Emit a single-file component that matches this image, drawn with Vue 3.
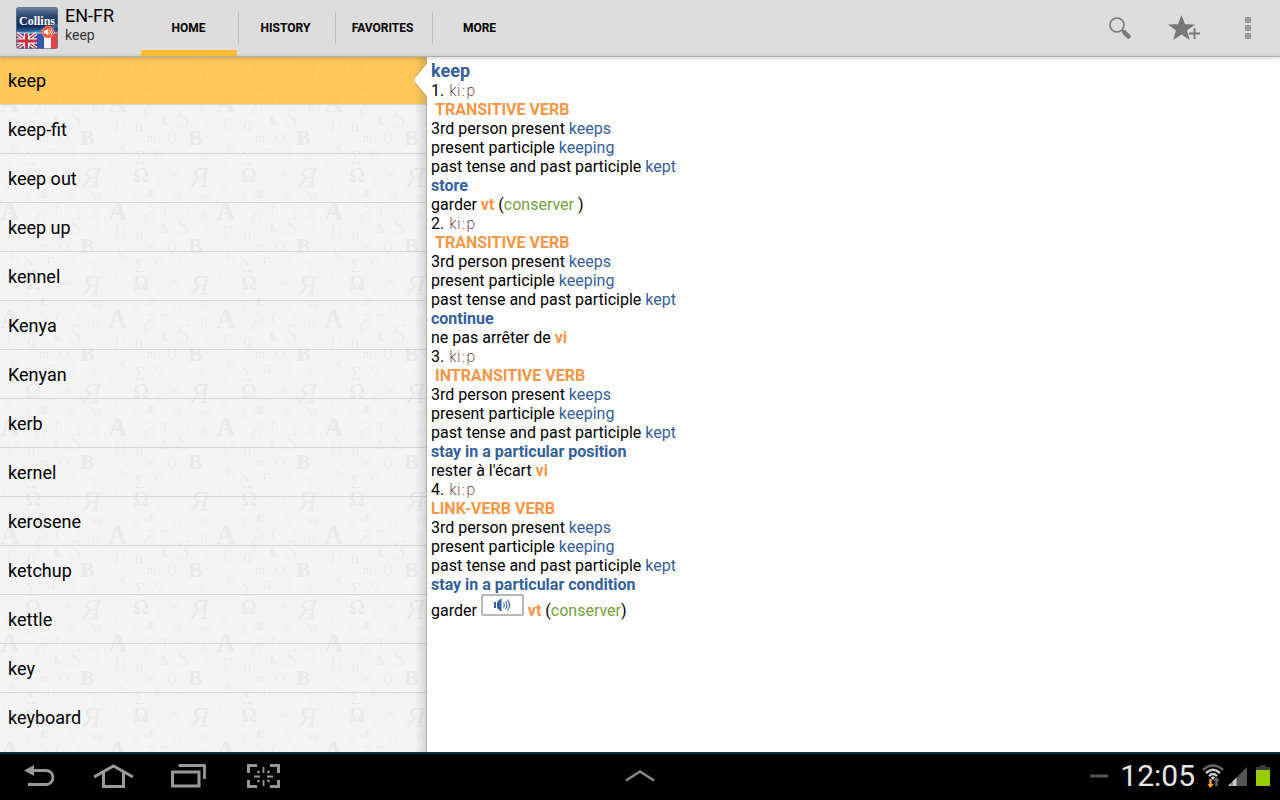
<template>
  <div class="app">
    <header class="action-bar">
      <div class="brand">
        <svg class="logo" viewBox="0 0 42 42" role="img" aria-label="Collins">
          <defs>
            <linearGradient id="logoSky" x1="0" y1="0" x2="0" y2="1">
              <stop offset="0" stop-color="#7186a0" />
              <stop offset="0.3" stop-color="#2f4c74" />
              <stop offset="0.7" stop-color="#0f2a58" />
              <stop offset="1" stop-color="#3c78b8" />
            </linearGradient>
            <clipPath id="logoClip"><rect width="42" height="42" rx="3" /></clipPath>
          </defs>
          <g clip-path="url(#logoClip)">
            <rect width="42" height="27" fill="url(#logoSky)" />
            <path d="M0 24 Q20 27 42 16 V20 Q24 28 0 27z" fill="#4c8ac4" opacity="0.6" />
            <rect y="26" width="21" height="16" fill="#2b3f86" />
            <path d="M0 26 L21 42 M21 26 L0 42" stroke="#eee" stroke-width="4" />
            <path d="M0 26 L21 42 M21 26 L0 42" stroke="#cc3340" stroke-width="1.4" />
            <path d="M10.500 26 V42 M0 34 H21" stroke="#eee" stroke-width="5.500" />
            <path d="M10.500 26 V42 M0 34 H21" stroke="#cc3340" stroke-width="3" />
            <rect x="21" y="26" width="7" height="16" fill="#3556b0" />
            <rect x="28" y="26" width="7" height="16" fill="#f4f4f6" />
            <rect x="35" y="26" width="7" height="16" fill="#de4348" />
            <path d="M0 26 H42" stroke="#d5d9e2" stroke-width="1" />
            <circle cx="32" cy="25" r="6" fill="#e5532c" stroke="#f0a080" stroke-width="0.8" />
            <path d="M27.800 23.500 h2 l2.500 -2.200 v7.400 l-2.500 -2.200 h-2z" fill="#fff" />
            <path d="M33.500 22.800 q1.600 2.200 0 4.400 M35 21.500 q2.400 3.500 0 7" stroke="#fff" fill="none" stroke-width="0.9" />
          </g>
          <rect x="0.500" y="0.500" width="41" height="41" rx="3" fill="none" stroke="#66738a" opacity="0.7" />
          <text x="21" y="18" text-anchor="middle" class="logo-text">Collins</text>
        </svg>
        <div class="titles">
          <h1 class="title">EN-FR</h1>
          <p class="subtitle">{{ selected }}</p>
        </div>
      </div>

      <nav class="tabs">
        <button
          v-for="tab in tabs"
          :key="tab"
          type="button"
          class="tab"
          :class="{ active: tab === activeTab }"
          @click="activeTab = tab"
        >{{ tab }}</button>
      </nav>

      <div class="actions">
        <button type="button" class="action" aria-label="Search">
          <svg width="24" height="24" viewBox="0 0 24 24">
            <circle cx="9" cy="9" r="7" fill="none" stroke="#777" stroke-width="1.600" />
            <path d="M13.500 13.500 L16 16" stroke="#777" stroke-width="2" />
            <path d="M16.500 16.500 L20.500 20.500" stroke="#777" stroke-width="4.500" stroke-linecap="round" />
          </svg>
        </button>
        <button type="button" class="action" aria-label="Add to favorites">
          <svg width="34" height="28" viewBox="0 0 34 28">
            <path d="M14.500 1 L18 10.200 L28 10.400 L20 16.400 L22.800 26 L14.500 20.400 L6.200 26 L9 16.400 L1 10.400 L11 10.200z" fill="#777" />
            <path d="M22 19.500 H33 M27.500 14 V25" stroke="#ddd" stroke-width="4" />
            <path d="M22 19.500 H33 M27.500 14 V25" stroke="#777" stroke-width="1.800" />
          </svg>
        </button>
        <button type="button" class="action" aria-label="More options">
          <svg width="6" height="22" viewBox="0 0 6 22">
            <path d="M0 0h6v6H0z M0 8h6v6H0z M0 16h6v6H0z" fill="#999" />
          </svg>
        </button>
      </div>
    </header>

    <main class="content">
      <aside class="word-pane">
        <svg class="pattern" aria-hidden="true">
          <defs>
            <pattern id="glyphs" width="108" height="108" patternUnits="userSpaceOnUse">
              <text
                v-for="g in glyphs"
                :key="g[0]"
                :x="g[1]"
                :y="g[2]"
                :font-size="g[3]"
                :class="g[4]"
              >{{ g[0] }}</text>
            </pattern>
          </defs>
          <rect width="100%" height="100%" fill="url(#glyphs)" />
        </svg>
        <ul class="words">
          <li v-for="word in words" :key="word" class="row">
            <button
              type="button"
              class="word"
              :class="{ selected: word === selected }"
              @click="selected = word"
            >{{ word }}</button>
            <svg v-if="word === selected" class="notch" viewBox="0 0 15 34" width="15" height="34">
              <path d="M15 0 L1 17 L15 34z" fill="#fff" />
              <path d="M15 0 L1 17 L15 34" fill="none" stroke="#c09a50" stroke-width="0.800" />
            </svg>
          </li>
        </ul>
      </aside>

      <article class="entry">
        <h2 class="headword">keep</h2>
        <section v-for="(sense, i) in senses" :key="i">
          <p>{{ i + 1 }}. <span class="ipa">ki:p</span></p>
          <p class="pos" :class="{ indent: sense.indent }">{{ sense.pos }}</p>
          <p v-for="form in forms" :key="form[0]">{{ form[0] }} <span class="form">{{ form[1] }}</span></p>
          <p class="gloss">{{ sense.gloss }}</p>
          <p>
            {{ sense.text }}
            <button v-if="sense.audio" type="button" class="speak" aria-label="Play pronunciation">
              <svg width="18" height="14" viewBox="0 0 18 14">
                <path d="M1 4 h2 v6 H1z M4 4 L8.500 0 V14 L4 10z" fill="#36609a" />
                <path d="M10.500 4.500 q1.600 2.500 0 5 M12.500 3 q2.800 4 0 8 M14.500 1.500 q4 5.500 0 11" fill="none" stroke="#36609a" stroke-width="1.100" />
              </svg>
            </button>
            {{ ' ' }}<span class="gram">{{ sense.gram }}</span>
            <template v-if="sense.note"> (<span class="note">{{ sense.note }}</span>)</template>
          </p>
        </section>
      </article>
    </main>

    <footer class="system-bar">
      <div class="keys">
        <button type="button" class="key" aria-label="Back">
          <svg width="36" height="28" viewBox="0 0 36 28">
            <path d="M9 8.500 H24 a7 7 0 0 1 0 14 H6" fill="none" stroke="#999" stroke-width="2.800" />
            <path d="M2 8.500 L12 3 V14z" fill="#999" />
          </svg>
        </button>
        <button type="button" class="key" aria-label="Home">
          <svg width="40" height="28" viewBox="0 0 40 28">
            <path d="M0 15 L19.500 4 L39 15" fill="none" stroke="#999" stroke-width="3" />
            <path d="M9.500 10 V24.500 H29.500 V10" fill="none" stroke="#999" stroke-width="3" />
          </svg>
        </button>
        <button type="button" class="key" aria-label="Recent apps">
          <svg width="40" height="28" viewBox="0 0 40 28">
            <path d="M2.500 10 H29 V24 H2.500z" fill="none" stroke="#999" stroke-width="3" />
            <path d="M8.500 3.500 H34.500 V17" fill="none" stroke="#999" stroke-width="2.800" />
          </svg>
        </button>
        <button type="button" class="key" aria-label="Screen capture">
          <svg width="36" height="28" viewBox="0 0 36 28">
            <path d="M2.500 11 V3.500 H11 M24 3.500 H32.500 V11 M32.500 18 V24.500 H24 M11 24.500 H2.500 V18" fill="none" stroke="#999" stroke-width="3" />
            <path d="M17.500 5 V11 M17.500 18 V24 M8 14.500 H14 M21 14.500 H27 M11.500 9 L13.500 11 M23.500 9 L21.500 11 M11.500 20 L13.500 18 M23.500 20 L21.500 18" stroke="#999" stroke-width="1.800" />
          </svg>
        </button>
      </div>
      <button type="button" class="key" aria-label="Open tray">
        <svg width="30" height="14" viewBox="0 0 30 14">
          <path d="M1 11.500 L15 2.500 L29 11.500" fill="none" stroke="#888" stroke-width="2.400" />
        </svg>
      </button>
      <div class="status">
        <svg width="18" height="4" viewBox="0 0 18 4"><path d="M0 2 H18" stroke="#555" stroke-width="3" /></svg>
        <time class="clock">12:05</time>
        <svg width="54" height="26" viewBox="0 0 54 26" role="img" aria-label="Wi-Fi and signal">
          <path d="M1 7 Q11 -2 21 7" fill="none" stroke="#666" stroke-width="2.600" />
          <path d="M4 10 Q11 3.500 18 10 M7 13 Q11 9 15 13" fill="none" stroke="#ccc" stroke-width="2.400" />
          <path d="M8.800 14.500 Q11 12.500 13.200 14.500 L11 17z" fill="#ddd" />
          <path d="M7.300 16 h2.400 v5 h2 L8.500 25 L5.300 21 h2z" fill="#f9a02d" />
          <path d="M13.300 23 v-5 h-2 L14.500 14 L17.700 18 h-2 v5z" fill="#666" />
          <path d="M26 23 L45 4 V23z" fill="#555" />
          <path d="M26 23 L29.500 19.500 V23z M30.500 23 V18.500 L34.500 14.500 V23z" fill="#ccc" />
        </svg>
        <svg width="14" height="22" viewBox="0 0 14 22" role="img" aria-label="Battery">
          <path d="M4 0 h6 v2 h4 v3 H0 V2 h4z" fill="#3d3d3d" />
          <rect y="5" width="14" height="16" fill="#99cc00" />
        </svg>
      </div>
    </footer>
  </div>
</template>

<script setup>
import { ref } from 'vue'

const tabs = ['HOME', 'HISTORY', 'FAVORITES', 'MORE']
const activeTab = ref('HOME')

const words = [
  'keep', 'keep-fit', 'keep out', 'keep up', 'kennel', 'Kenya', 'Kenyan',
  'kerb', 'kernel', 'kerosene', 'ketchup', 'kettle', 'key', 'keyboard'
]
const selected = ref('keep')

const forms = [
  ['3rd person present', 'keeps'],
  ['present participle', 'keeping'],
  ['past tense and past participle', 'kept']
]

const senses = [
  { pos: 'TRANSITIVE VERB', indent: true, gloss: 'store', text: 'garder', gram: 'vt', note: 'conserver ' },
  { pos: 'TRANSITIVE VERB', indent: true, gloss: 'continue', text: 'ne pas arrêter de', gram: 'vi' },
  { pos: 'INTRANSITIVE VERB', indent: true, gloss: 'stay in a particular position', text: "rester à l'écart", gram: 'vi' },
  { pos: 'LINK-VERB VERB', gloss: 'stay in a particular condition', text: 'garder', gram: 'vt', note: 'conserver', audio: true }
]

// background letters: glyph, x, y, size, style
const glyphs = [
  ['Ω', 25, 18, 20, 'bold'],
  ['Я', 82, 23, 29, 'italic'],
  ['Ö', 2, 6, 11, 'faint'],
  ['љ', 63, 13, 12, 'italic'],
  ['п', 6, 25, 10, 'faint'],
  ['с', 49, 22, 16, 'faint'],
  ['g', 24, 36, 14, 'faint'],
  ['Æ', 37, 34, 12, 'bold italic'],
  ['Д', 65, 36, 13, 'faint'],
  ['w', 91, 37, 17, 'bold faint'],
  ['A', 0, 56, 27, 'bold'],
  ['∂', 35, 60, 26, 'faint'],
  ['T', 53, 50, 12, ''],
  ['e', 78, 49, 13, 'italic faint'],
  ['ß', 92, 56, 15, 'bold italic faint'],
  ['S', 68, 71, 27, 'italic faint'],
  ['Ŋ', 6, 75, 18, 'faint'],
  ['ü', 27, 76, 17, ''],
  ['ѣ', 53, 69, 12, 'bold'],
  ['q', 95, 67, 11, 'faint'],
  ['B', 80, 89, 22, 'bold'],
  ['m', 39, 86, 12, ''],
  ['O', 59, 87, 14, ''],
  ['K', 9, 97, 16, 'faint'],
  ['∑', 26, 105, 15, ''],
  ['G', 47, 101, 12, ''],
  ['ζ', 71, 99, 12, 'faint'],
  ['X', 89, 105, 13, 'faint']
]
</script>

<style>
body {
  margin: 0;
}
</style>

<style scoped>
.app {
  display: flex;
  flex-direction: column;
  height: 100vh;
  background: #fff;
  color: #000;
  font-family: Roboto, "Noto Sans", sans-serif;
}

button {
  margin: 0;
  padding: 0;
  border: 0;
  background: none;
  color: inherit;
  font-family: inherit;
}

h1,
h2,
p,
ul {
  margin: 0;
  padding: 0;
}

svg {
  display: block;
  flex: none;
}

/* 顶部操作栏 */
.action-bar {
  position: relative;
  z-index: 2;
  display: flex;
  height: 56px;
  box-sizing: border-box;
  border-bottom: 2px solid #d0d0d0;
  background: #ddd;
  box-shadow: 0 1px 0 #b0b0b0, 0 2px 5px rgba(0, 0, 0, 0.2);
}

.brand {
  display: flex;
  width: 141px;
  box-sizing: border-box;
  padding: 7px 0 0 16px;
  gap: 7px;
}

.logo {
  width: 42px;
  height: 42px;
}

.logo-text {
  fill: #fff;
  font-family: "Liberation Serif", serif;
  font-size: 12px;
  font-weight: bold;
}

.title {
  font-size: 18px;
  line-height: 18px;
  font-weight: 400;
}

.subtitle {
  color: #333;
  font-size: 14px;
  line-height: 20px;
}

.tabs {
  display: flex;
  height: 56px;
}

.tab {
  position: relative;
  width: 97px;
  padding-right: 2px;
  font-size: 12px;
  font-weight: 700;
}

.tab + .tab::before {
  position: absolute;
  top: 12px;
  bottom: 12px;
  left: 0;
  width: 1px;
  background: #bfbfbf;
  content: "";
}

.tab.active::after {
  position: absolute;
  right: 1px;
  bottom: 0;
  left: 0;
  height: 6px;
  background: #ffbb33;
  content: "";
}

.actions {
  display: flex;
  margin-left: auto;
}

.action {
  display: flex;
  width: 64px;
  height: 56px;
  align-items: center;
  justify-content: center;
}

/* 内容区 */
.content {
  display: flex;
  flex: 1;
  min-height: 0;
}

.word-pane {
  position: relative;
  width: 33.36%;
  flex: none;
  background: #f4f4f4;
}

.word-pane::after {
  position: absolute;
  top: 0;
  right: 0;
  bottom: 0;
  width: 12px;
  box-sizing: border-box;
  border-right: 1px solid #b0b0b0;
  background: linear-gradient(to right, rgba(0, 0, 0, 0), rgba(0, 0, 0, 0.12));
  content: "";
  pointer-events: none;
}

.pattern {
  position: absolute;
  width: 100%;
  height: 100%;
}

.pattern text {
  fill: #eaeaea;
  font-family: "Liberation Serif", "DejaVu Serif", serif;
}

.pattern .bold {
  font-weight: bold;
}

.pattern .italic {
  font-style: italic;
}

.pattern .faint {
  fill: #eee;
}

.words {
  position: relative;
  height: 100%;
  overflow: hidden;
  list-style: none;
}

.row {
  position: relative;
  border-bottom: 1px solid #d6d6d6;
}

.row:last-child {
  border-bottom: 0;
}

.word {
  display: block;
  width: 100%;
  height: 48px;
  padding: 0 8px;
  font-size: 18px;
  text-align: left;
}

.word.selected {
  background: rgba(255, 187, 51, 0.8);
}

.notch {
  position: absolute;
  z-index: 1;
  top: 7px;
  right: 0;
}

.entry {
  flex: 1;
  padding: 5px 4px;
  overflow: auto;
  font-size: 16px;
  line-height: 19px;
}

.headword {
  color: #36609a;
  font-size: 18px;
  line-height: 20px;
}

.ipa {
  color: #551519;
  font-family: "DejaVu Sans Light", "DejaVu Sans", sans-serif;
  font-size: 15px;
  font-weight: 200;
  line-height: 1;
}

.pos,
.gram {
  color: #f79646;
  font-weight: 700;
}

.indent {
  padding-left: 4px;
}

.form {
  color: #36609a;
}

.gloss {
  color: #36609a;
  font-weight: 700;
}

.note {
  color: #76a03c;
  white-space: pre;
}

.speak {
  display: inline-flex;
  width: 43px;
  height: 22px;
  box-sizing: border-box;
  align-items: center;
  justify-content: center;
  border: 2px solid #b5b8bd;
  border-radius: 2px;
  background: #fff;
  vertical-align: text-bottom;
  margin-bottom: 4px;
}

/* 底部系统栏 */
.system-bar {
  display: grid;
  height: 48px;
  box-sizing: border-box;
  padding-bottom: 2px;
  grid-template-columns: 1fr auto 1fr;
  align-items: center;
  border-top: 2px solid #0b3147;
  background: #000;
}

.keys {
  display: flex;
  padding-left: 22px;
  gap: 36px;
}

.status {
  display: flex;
  align-items: center;
  justify-content: flex-end;
  padding-right: 10px;
}

.clock {
  margin: 0 7px 0 12px;
  color: #e6e6e6;
  font-size: 30px;
  line-height: 36px;
}
</style>
